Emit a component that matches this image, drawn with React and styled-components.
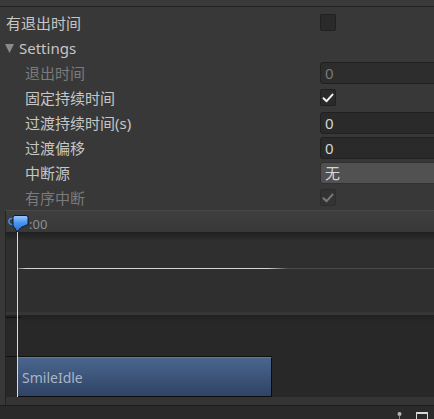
import React from 'react';
import styled, { createGlobalStyle } from 'styled-components';

const Global = createGlobalStyle`
	html, body {
		margin: 0;
		padding: 0;
		background: #383838;
	}
	body {
		font-family: "Noto Sans", "Noto Sans CJK SC", sans-serif;
	}
`;

const Root = styled.div`
	display: flex;
	flex-direction: column;
	width: 434px;
	height: 419px;
	overflow: hidden;
	background: #383838;
	& > * {
		flex-shrink: 0;
	}
`;

const TopStrip = styled.div`
	height: 6px;
	background: #3a3a3a;
	border-bottom: 1px solid #232323;
`;

const Inspector = styled.div`
	display: flex;
	flex-direction: column;
	padding-top: 3px;
`;

const Row = styled.div`
	display: flex;
	align-items: center;
	height: 25px;
	flex: none;
`;

const Label = styled.div`
	display: flex;
	align-items: center;
	box-sizing: border-box;
	width: 320px;
	flex: none;
	padding-left: ${ props => props.indent }px;
	padding-top: 1px;
	font-size: 15px;
	line-height: 1;
	white-space: nowrap;
	color: ${ props => props.disabled ? '#7b7b7b' : '#c6c6c6' };
`;

const Foldout = styled.svg`
	width: 9px;
	height: 10px;
	margin-right: 5px;
	margin-left: -1px;
`;

const Check = styled.div`
	display: flex;
	align-items: center;
	justify-content: center;
	box-sizing: border-box;
	width: 16px;
	height: 17px;
	border-radius: 2px;
	border: 1px solid ${ props => props.disabled ? '#2c2c2c' : '#202020' };
	background: ${ props => props.disabled ? '#333333' : '#2a2a2a' };
`;

const Field = styled.div`
	display: flex;
	align-items: center;
	box-sizing: border-box;
	width: 140px;
	height: 22px;
	flex: none;
	padding-left: 4px;
	border-radius: 3px;
	border: 1px solid ${ props => props.popup ? '#303030' : '#202020' };
	background: ${ props => props.popup ? '#515151' : props.disabled ? '#2d2d2d' : '#2a2a2a' };
	font-size: 15px;
	color: ${ props => props.disabled ? '#7a7a7a' : '#d6d6d6' };
`;

const Timeline = styled.div`
	position: relative;
	display: flex;
	flex-direction: column;
	margin-left: 5px;
	border-left: 1px solid #232323;
	border-top: 1px solid #484848;
	background: #2f2f2f;
	& > * {
		flex-shrink: 0;
	}
`;

const Ruler = styled.div`
	position: relative;
	display: flex;
	align-items: center;
	box-sizing: border-box;
	height: 21px;
	padding: 4px 0 0 23px;
	background: linear-gradient(#3e3e3e, #383838);
	font-size: 13px;
	color: #8e8e8e;
`;

const Shade = styled.div`
	height: 8px;
	background: linear-gradient(#1f1f1f, #2d2d2d);
`;

const CurveArea = styled.div`
	display: flex;
	flex-direction: column;
	box-sizing: border-box;
	height: 72px;
	padding-top: 28px;
	background: #2f2f2f;
`;

const Curve = styled.div`
	height: 1px;
	margin-left: 12px;
	background: linear-gradient(90deg, #777 0px, #d4d4d4 8px, #d4d4d4 250px, #4a4a4a 270px, #4a4a4a 100%);
`;

const TrackTop = styled.div`
	height: 3px;
	background: #363636;
`;

const Track = styled.div`
	display: flex;
	flex-direction: column;
	justify-content: space-between;
	height: 82px;
	background: linear-gradient(#212121 0px, #282828 7px, #282828 100%);
`;

const Tick = styled.div`
	width: 15px;
	height: 1px;
	margin-top: 2px;
	background: #111;
`;

const ClipRow = styled.div`
	display: flex;
	width: 266px;
	height: 40px;
	border-top: 1px solid #111;
`;

const Clip = styled.div`
	display: flex;
	align-items: center;
	box-sizing: border-box;
	width: 256px;
	margin-left: 11px;
	padding-left: 5px;
	border-right: 1px solid #0c0c0c;
	border-bottom: 1px solid #0c0c0c;
	border-top: 1px solid #5a7aa6;
	background: linear-gradient(#4a658c, #2f4465);
	font-size: 14px;
	color: #a9b5c6;
`;

const BottomStrip = styled.div`
	height: 8px;
	background: #343434;
`;

const Playhead = styled.div`
	position: absolute;
	left: 11px;
	top: 21px;
	bottom: 8px;
	width: 1px;
	background: #cfdcf2;
`;

const Marker = styled.svg`
	position: absolute;
	left: 0;
	top: 4px;
	width: 24px;
	height: 18px;
`;

const Toolbar = styled.div`
	display: flex;
	justify-content: flex-end;
	align-items: flex-start;
	gap: 14px;
	flex: 1 1 auto;
	min-height: 0;
	overflow: hidden;
	padding: 6px 6px 0 0;
	border-top: 1px solid #1e1e1e;
	background: #2a2a2a;
`;

function Toggle( { checked, disabled } ) {
	return (
		<Check disabled={ disabled }>
			{ checked && (
				<svg width="12" height="10" viewBox="0 0 12 10">
					<path d="M1.5 5.2 L4.6 8.2 L10.5 1.6" fill="none"
						stroke={ disabled ? '#7a7a7a' : '#f2f2f2' }
						strokeWidth="2" strokeLinecap="round" strokeLinejoin="round" />
				</svg>
			) }
		</Check>
	);
}

export default function App() {
	return (
		<Root>
			<Global />
			<TopStrip />
			<Inspector>
				<Row>
					<Label indent={ 6 }>有退出时间</Label>
					<Toggle />
				</Row>
				<Row>
					<Label indent={ 6 }>
						<Foldout viewBox="0 0 9 10">
							<polygon points="0,1 9,1 4.5,10" fill="#8a8a8a" />
						</Foldout>
						Settings
					</Label>
				</Row>
				<Row>
					<Label indent={ 25 } disabled>退出时间</Label>
					<Field disabled>0</Field>
				</Row>
				<Row>
					<Label indent={ 25 }>固定持续时间</Label>
					<Toggle checked />
				</Row>
				<Row>
					<Label indent={ 25 }>过渡持续时间(s)</Label>
					<Field>0</Field>
				</Row>
				<Row>
					<Label indent={ 25 }>过渡偏移</Label>
					<Field>0</Field>
				</Row>
				<Row>
					<Label indent={ 25 }>中断源</Label>
					<Field popup>无</Field>
				</Row>
				<Row>
					<Label indent={ 25 } disabled>有序中断</Label>
					<Toggle checked disabled />
				</Row>
			</Inspector>

			<Timeline>
				<Ruler>
					:00
					<Marker viewBox="0 0 24 18">
						<defs>
							<linearGradient id="mk" x1="0" y1="0" x2="0" y2="1">
								<stop offset="0" stopColor="#9ccaff" />
								<stop offset="0.45" stopColor="#4a94f0" />
								<stop offset="1" stopColor="#2a6cc8" />
							</linearGradient>
						</defs>
						<path d="M6.5 3.2 A3.6 3.2 0 0 0 6.5 9.6" fill="none" stroke="#4a90ea" strokeWidth="1.5" />
						<path d="M7 2.5 Q7 0.5 9 0.5 L20 0.5 Q22 0.5 22 2.5 L22 9.5 L15 12.5 L11 17 L8.5 12.5 L7 11 Z"
							fill="url(#mk)" stroke="#0d1a2c" strokeWidth="1" />
					</Marker>
				</Ruler>
				<Shade />
				<CurveArea>
					<Curve />
				</CurveArea>
				<TrackTop />
				<Track>
					<Tick />
					<ClipRow>
						<Clip>SmileIdle</Clip>
					</ClipRow>
				</Track>
				<BottomStrip />
				<Playhead />
			</Timeline>

			<Toolbar>
				<svg width="5" height="7" viewBox="0 0 5 7">
					<circle cx="2.5" cy="2" r="2" fill="#b8b8b8" />
					<rect x="2" y="3.5" width="1" height="3.5" fill="#8a8a8a" />
				</svg>
				<svg width="12" height="8" viewBox="0 0 12 8">
					<rect x="0.5" y="0.5" width="11" height="8" fill="none" stroke="#d8d8d8" />
					<rect x="0" y="0" width="12" height="2" fill="#d8d8d8" />
				</svg>
			</Toolbar>
		</Root>
	);
}
